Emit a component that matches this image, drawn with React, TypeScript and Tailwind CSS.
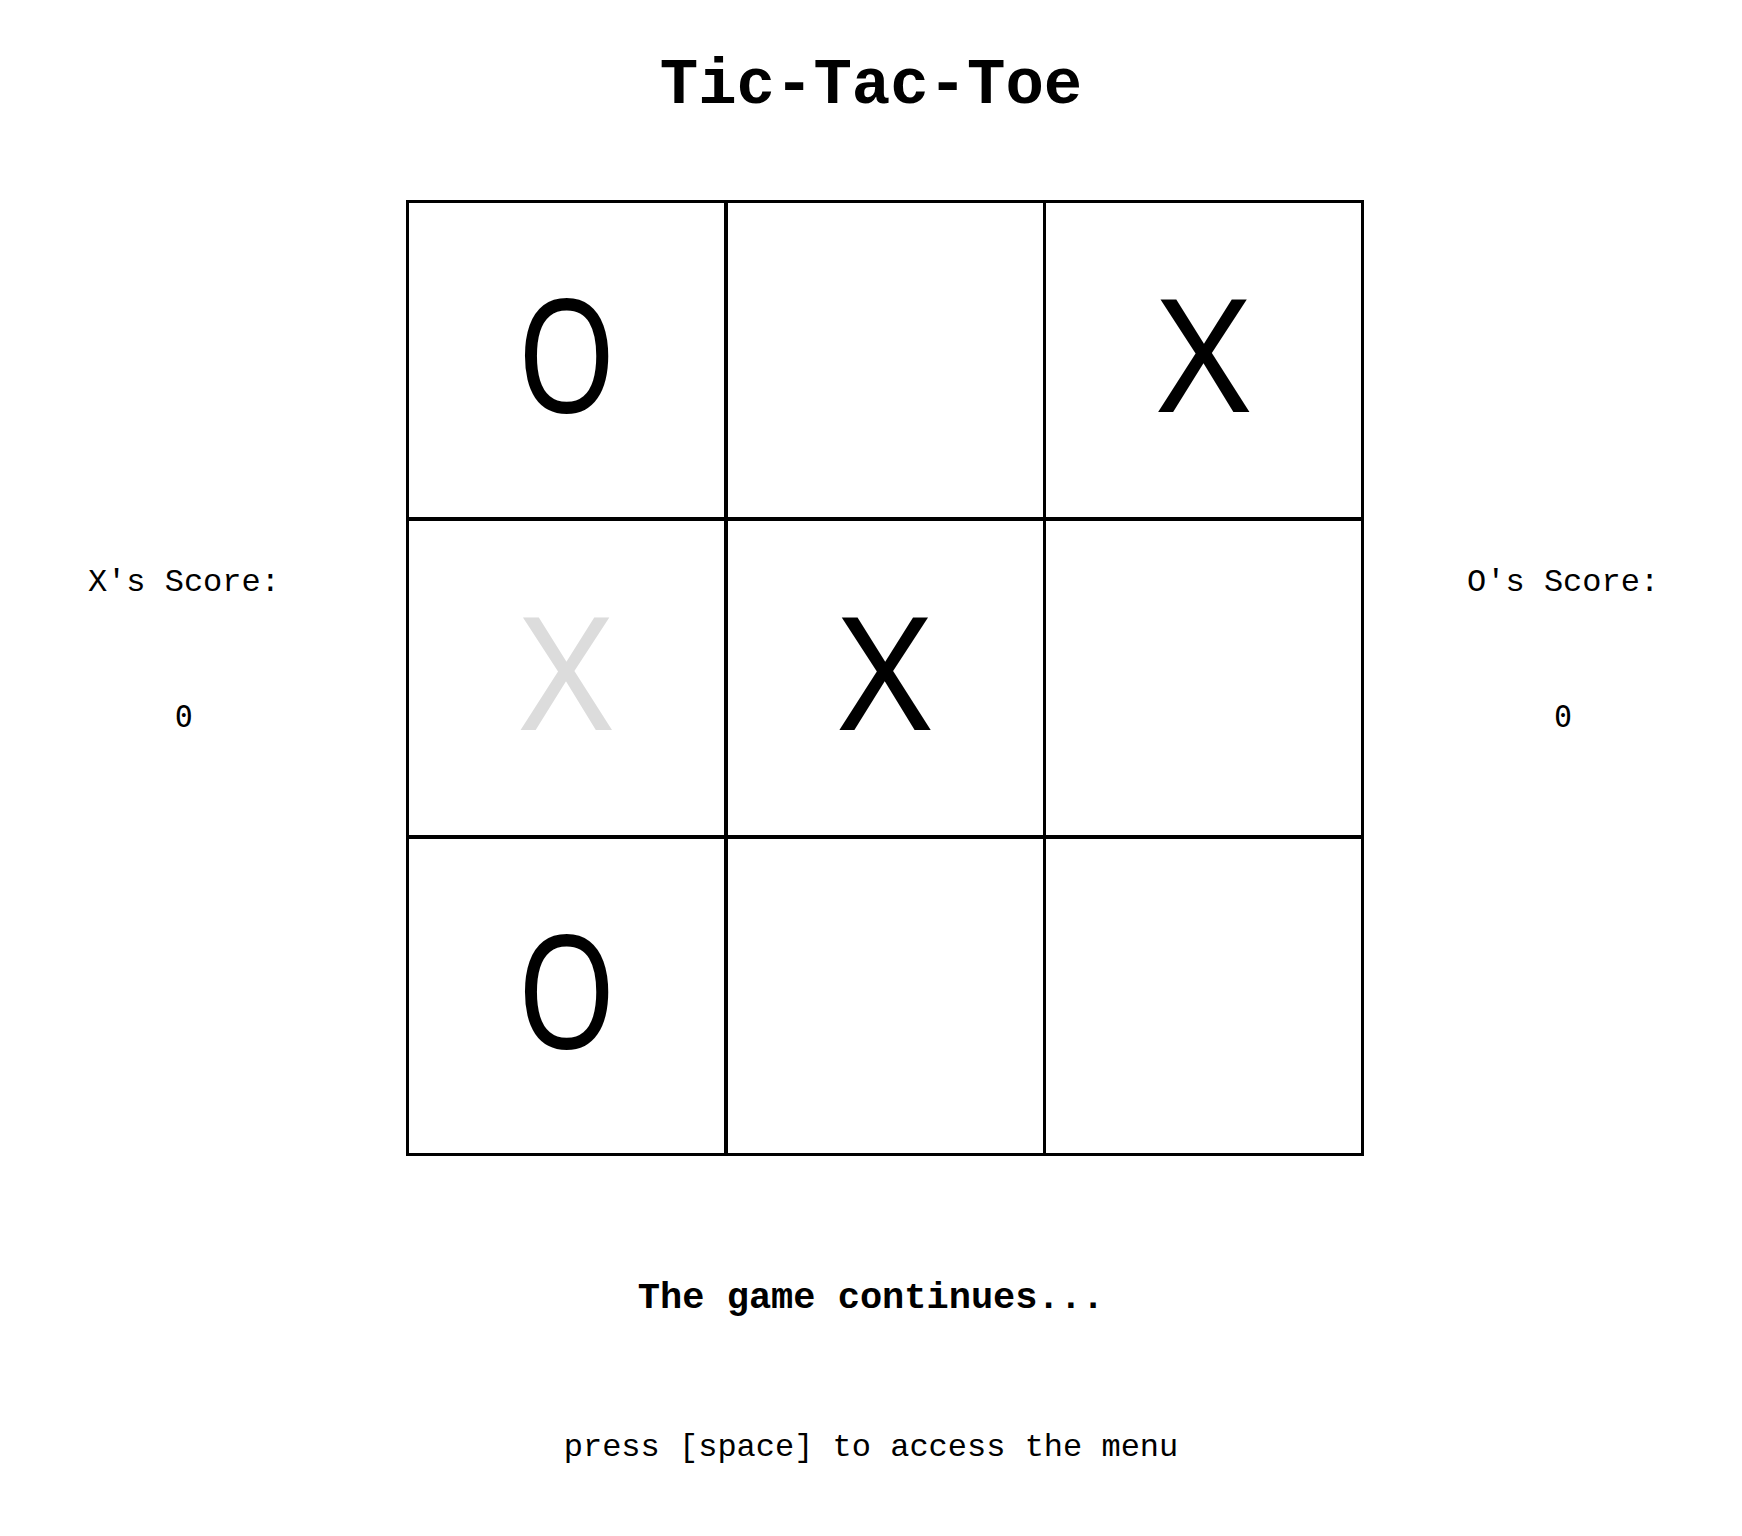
import React from 'react'

// board state: '' = empty, 'ghost' = hover preview
const BOARD: { mark: string; ghost?: boolean }[] = [
  { mark: 'O' },
  { mark: '' },
  { mark: 'X' },
  { mark: 'X', ghost: true },
  { mark: 'X' },
  { mark: '' },
  { mark: 'O' },
  { mark: '' },
  { mark: '' },
]

const mono = "font-['Liberation_Mono','DejaVu_Sans_Mono',monospace]"

function Score({ label, value }: { label: string; value: number }) {
  return (
    <div className={`flex flex-col items-center pt-[364px] ${mono}`}>
      <p className="text-[32px] leading-[38px] text-black">{label}</p>
      <p className="mt-[96px] text-[30px] leading-[38px] text-black font-['DejaVu_Sans_Mono',monospace]">{value}</p>
    </div>
  )
}

export default function App() {
  return (
    <div className="min-h-screen w-full bg-white text-black">
      {/* Title */}
      <h1 className={`pt-[50px] text-center text-[64px] leading-[72px] font-bold ${mono}`}>Tic-Tac-Toe</h1>

      {/* Board row */}
      <div className="mt-[78px] flex items-start">
        <div className="w-[368px]">
          <Score label="X's Score:" value={0} />
        </div>

        <div className="ml-[38px] border border-black">
          <div className="grid grid-cols-3">
            {BOARD.map((c, i) => (
              <div
                key={i}
                className="flex h-[318px] w-[319px] items-center justify-center border-2 border-black pb-[18px]"
              >
                <span
                  className={`font-['Noto_Sans','Open_Sans',sans-serif] text-[158px] leading-none ${
                    c.mark === 'O' ? 'scale-x-[0.8]' : ''
                  } ${c.ghost ? 'text-[#dcdcdc]' : 'text-black'}`}
                >
                  {c.mark}
                </span>
              </div>
            ))}
          </div>
        </div>

        <div className="ml-[20px] w-[358px]">
          <Score label="O's Score:" value={0} />
        </div>
      </div>

      {/* Status */}
      <p className={`mt-[120px] text-center text-[37px] leading-[44px] font-bold ${mono}`}>The game continues...</p>
      <p className={`mt-[108px] text-center text-[32px] leading-[40px] ${mono}`}>press [space] to access the menu</p>
    </div>
  )
}
